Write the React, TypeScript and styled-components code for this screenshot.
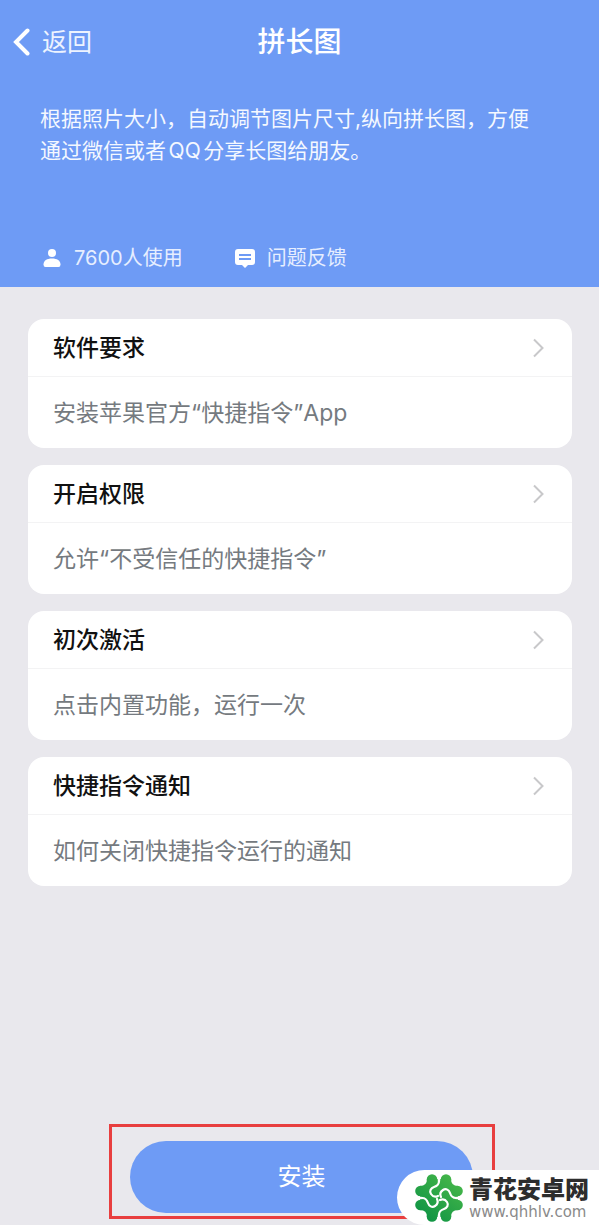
import React from "react";
import styled, { createGlobalStyle } from "styled-components";

const GlobalStyle = createGlobalStyle`
  * { box-sizing: border-box; }
  html, body, #root { height: 100%; }
  body {
    margin: 0;
    background: #e9e8ed;
    font-family: Inter, "Noto Sans CJK SC", sans-serif;
  }
  button { font: inherit; border: 0; cursor: pointer; }
  h1, h2, p { margin: 0; }
  a { color: inherit; text-decoration: none; }
  svg { display: block; flex: none; }
`;

const Page = styled.div`
  display: flex;
  flex-direction: column;
  min-height: 100%;
`;

const Header = styled.header`
  display: flex;
  flex-direction: column;
  background: #6e9bf5;
  color: #fff;
  padding-bottom: 14px;
`;

const NavBar = styled.nav`
  display: grid;
  grid-template-columns: 1fr auto 1fr;
  align-items: center;
  height: 83px;
  padding: 0 12px;
`;

const BackButton = styled.button`
  display: flex;
  align-items: center;
  justify-self: start;
  gap: 12px;
  padding: 0;
  background: none;
  color: #edf3ff;
  font-size: 25px;
  line-height: 36px;
`;

const Title = styled.h1`
  font-size: 28px;
  line-height: 40px;
  font-weight: 500;
`;

const Intro = styled.p`
  padding: 20px 56px 0 40px;
  font-size: 21px;
  line-height: 32px;
  color: #f4f8ff;
  text-autospace: normal;
`;

const Stats = styled.div`
  display: flex;
  align-items: center;
  gap: 52px;
  margin-top: 76px;
  padding: 0 42px;
`;

const Stat = styled.span`
  display: flex;
  align-items: center;
  gap: 12px;
  font-size: 20px;
  line-height: 30px;
  color: #e6eeff;
`;

const Cards = styled.main`
  display: flex;
  flex-direction: column;
  gap: 17px;
  padding: 32px 27px 32px 28px;
`;

const Card = styled.section`
  border-radius: 16px;
  background: #fff;
  overflow: hidden;
`;

const CardHead = styled.button`
  display: flex;
  align-items: center;
  justify-content: space-between;
  width: 100%;
  height: 58px;
  padding: 0 27px 0 25px;
  background: none;
  border-bottom: 1px solid #f3f3f4;
  color: #111;
`;

const CardTitle = styled.span`
  font-size: 23px;
  line-height: 32px;
  font-weight: 500;
`;

const CardText = styled.p`
  padding: 20px 25px 19px;
  font-size: 23px;
  line-height: 32px;
  color: #757a80;
`;

const Footer = styled.footer`
  position: relative;
  margin-top: auto;
  padding: 0 104px 6px 109px;
`;

const Highlight = styled.div`
  border: 3px solid #e83e3f;
  padding: 14px 19px 3px 18px;
`;

const InstallButton = styled.button`
  width: 100%;
  height: 72px;
  border-radius: 36px;
  background: #6e9bf5;
  color: #fff;
  font-size: 24px;
  line-height: 36px;
`;

const Watermark = styled.a`
  position: absolute;
  right: 0;
  bottom: 0;
  display: flex;
  align-items: center;
  gap: 6px;
  width: 202px;
  height: 55px;
  padding-left: 18px;
  border-radius: 28px 0 0 28px;
  background: #fff;
`;

const MarkText = styled.span`
  display: flex;
  flex-direction: column;
`;

const MarkName = styled.span`
  font-size: 24px;
  line-height: 28px;
  font-weight: 900;
  color: #2d2d2d;
  white-space: nowrap;
`;

const MarkUrl = styled.span`
  font-family: "DejaVu Sans", sans-serif;
  font-size: 15px;
  line-height: 16px;
  color: #8a8a8a;
`;

const cards = [
  { title: "软件要求", text: "安装苹果官方“快捷指令”App" },
  { title: "开启权限", text: "允许“不受信任的快捷指令”" },
  { title: "初次激活", text: "点击内置功能，运行一次" },
  { title: "快捷指令通知", text: "如何关闭快捷指令运行的通知" },
];

const BackIcon = () => (
  <svg width="18" height="30" viewBox="0 0 18 30" fill="none" stroke="#fff" strokeWidth="4" strokeLinecap="round" aria-hidden="true">
    <path d="M15.500 3.500 4 15l11.500 11.500" />
  </svg>
);

const UserIcon = () => (
  <svg width="20" height="20" viewBox="0 0 20 20" fill="#fff" aria-hidden="true">
    <circle cx="10" cy="5" r="4" />
    <path d="M1.500 16.500C1.500 12.500 5 10.500 10 10.500s8.500 2 8.500 6q0 2.500-2 2.500h-13q-2 0-2-2.500z" />
  </svg>
);

const MessageIcon = () => (
  <svg width="20" height="20" viewBox="0 0 20 20" aria-hidden="true">
    <path fill="#fff" d="M3 1h14q3 0 3 3v10q0 3-3 3h-4l-3 3-3-3H3q-3 0-3-3V4q0-3 3-3z" />
    <path stroke="#6e9bf5" strokeWidth="1.800" d="M4 7h12M4 11h12" />
  </svg>
);

const ChevronIcon = () => (
  <svg width="12" height="20" viewBox="0 0 12 20" fill="none" stroke="#c8c8ca" strokeWidth="2" aria-hidden="true">
    <path d="m1 1.500 8.500 8.500L1 18.500" />
  </svg>
);

const KnotLogo = () => (
  <svg width="48" height="48" viewBox="0 0 48 48" aria-hidden="true">
    <defs>
      <linearGradient id="leaf" gradientUnits="userSpaceOnUse" x1="8" y1="44" x2="40" y2="4">
        <stop offset="0" stopColor="#0f9444" />
        <stop offset="1" stopColor="#45b649" />
      </linearGradient>
    </defs>
    <g fill="url(#leaf)">
      <path d="M12 5H36Q36 12 43 12V36Q36 36 36 43H12Q12 36 5 36V12Q12 12 12 5z" />
      <circle cx="17" cy="5.500" r="5.300" />
      <circle cx="31" cy="5.500" r="5.300" />
      <circle cx="42.500" cy="17" r="5.300" />
      <circle cx="42.500" cy="31" r="5.300" />
      <circle cx="31" cy="42.500" r="5.300" />
      <circle cx="17" cy="42.500" r="5.300" />
      <circle cx="5.500" cy="31" r="5.300" />
      <circle cx="5.500" cy="17" r="5.300" />
    </g>
    {[0, 90, 180, 270].map((turn) => (
      <g key={turn} transform={`rotate(${turn} 24 24)`}>
        <path fill="#fff" d="M21 0h6q-2 3-2 8h-2q0-5-2-8z" />
        <path
          fill="none"
          stroke="#fff"
          strokeWidth="2.200"
          strokeLinecap="round"
          d="M24 4v3c0 4-2 5-5 6s-5 4-3 7 5 3 7 2"
        />
      </g>
    ))}
  </svg>
);

export default function App() {
  return (
    <>
      <GlobalStyle />
      <Page>
        <Header>
          <NavBar>
            <BackButton type="button"><BackIcon />返回</BackButton>
            <Title>拼长图</Title>
          </NavBar>
          <Intro>根据照片大小，自动调节图片尺寸,纵向拼长图，方便通过微信或者QQ分享长图给朋友。</Intro>
          <Stats>
            <Stat><UserIcon />7600人使用</Stat>
            <Stat as="a" href="#feedback"><MessageIcon />问题反馈</Stat>
          </Stats>
        </Header>
        <Cards>
          {cards.map((card) => (
            <Card key={card.title}>
              <CardHead type="button">
                <CardTitle>{card.title}</CardTitle>
                <ChevronIcon />
              </CardHead>
              <CardText>{card.text}</CardText>
            </Card>
          ))}
        </Cards>
        <Footer>
          <Highlight>
            <InstallButton type="button">安装</InstallButton>
          </Highlight>
          <Watermark href="#home">
            <KnotLogo />
            <MarkText>
              <MarkName>青花安卓网</MarkName>
              <MarkUrl>www.qhhlv.com</MarkUrl>
            </MarkText>
          </Watermark>
        </Footer>
      </Page>
    </>
  );
}
